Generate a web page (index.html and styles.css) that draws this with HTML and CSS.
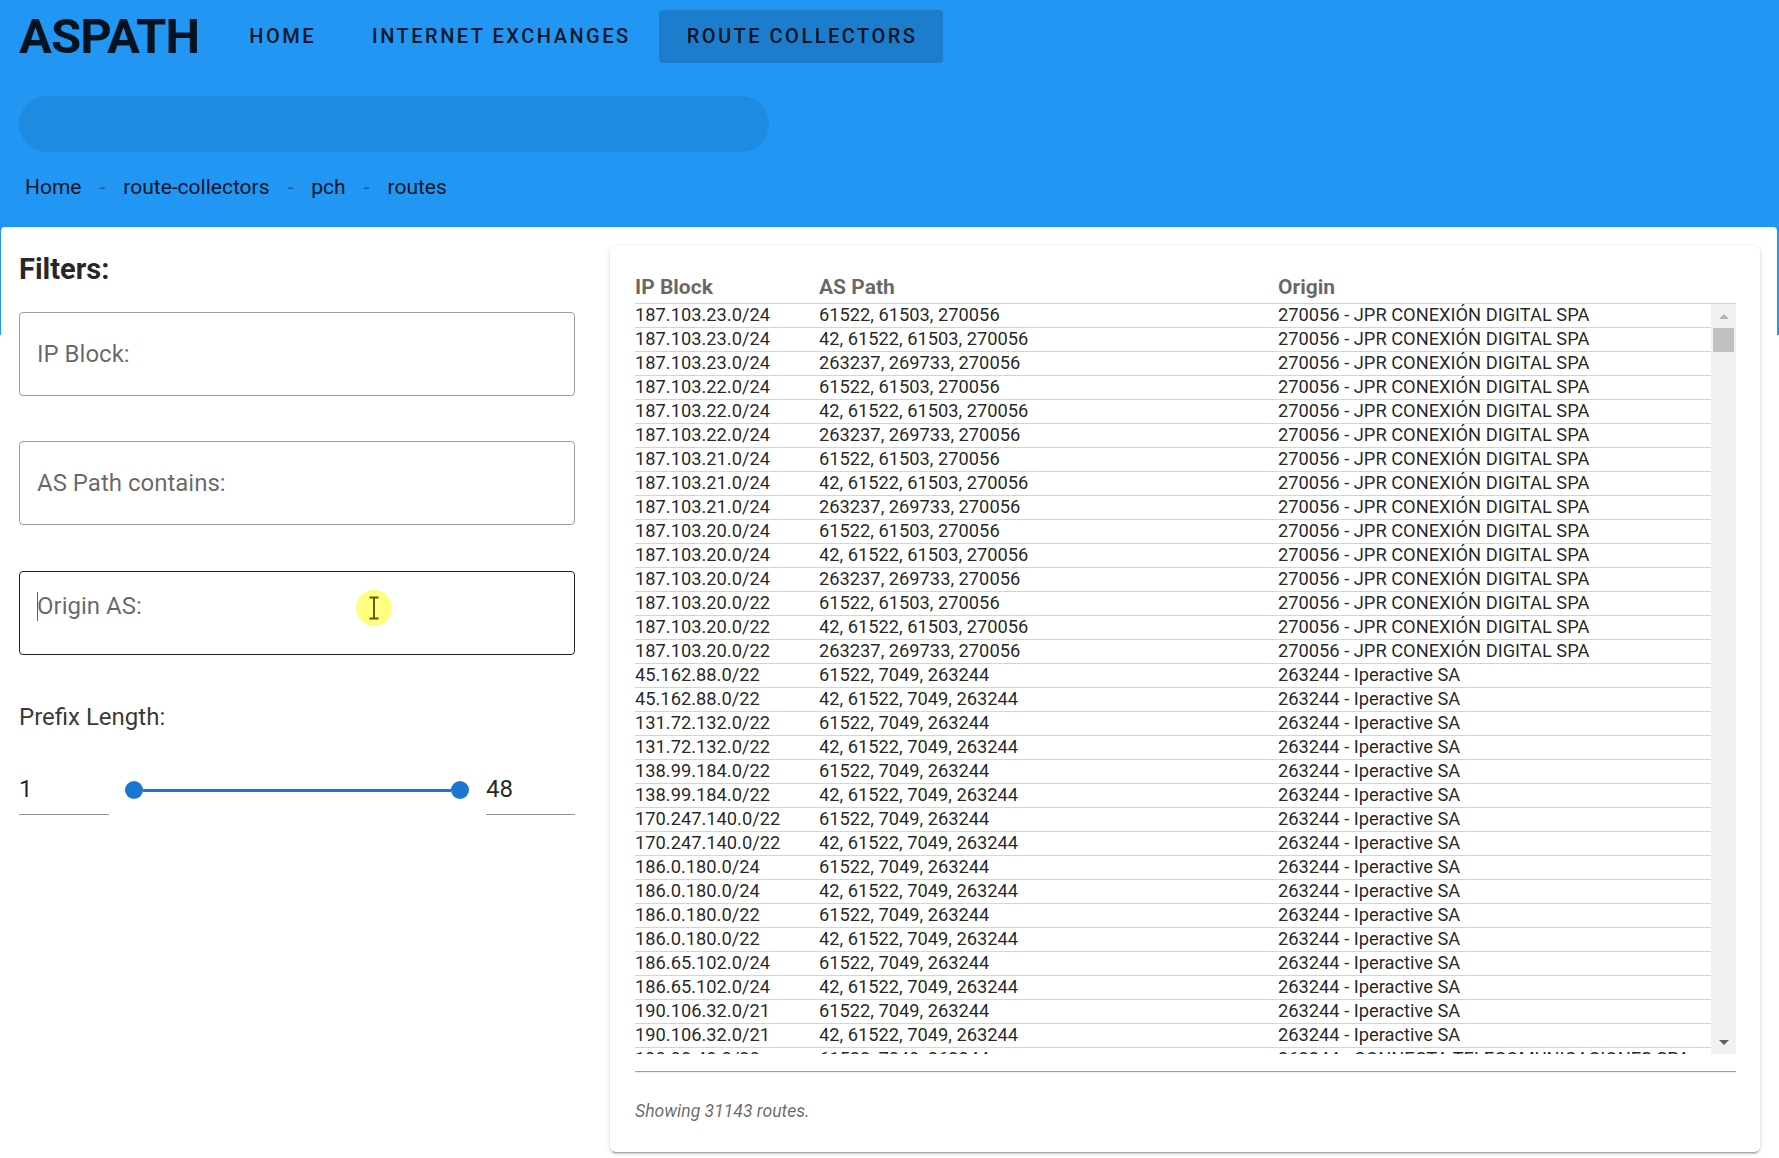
FILE: index.html
```html
<!DOCTYPE html>
<html lang="en">
<head>
<meta charset="utf-8">
<title>ASPATH - Route collectors</title>
<link rel="stylesheet" href="styles.css">
</head>
<body>
<header class="appbar">
  <div class="toolbar">
    <div class="brand">ASPATH</div>
    <nav class="nav">
      <a class="nav-btn" href="#">Home</a>
      <a class="nav-btn" href="#">Internet Exchanges</a>
      <a class="nav-btn active" href="#">Route Collectors</a>
    </nav>
  </div>
  <div class="search"></div>
  <ul class="crumbs">
    <li>Home</li><li class="divider">-</li>
    <li>route-collectors</li><li class="divider">-</li>
    <li>pch</li><li class="divider">-</li>
    <li>routes</li>
  </ul>
</header>

<div class="page">
  <main class="sheet">
    <section class="filters">
      <h2 class="filters-title">Filters:</h2>
      <div class="field"><span class="label">IP Block:</span></div>
      <div class="field"><span class="label">AS Path contains:</span></div>
      <div class="field focused">
        <span class="caret"></span><span class="label">Origin AS:</span>
        <span class="cursor-spot">
          <svg width="36" height="36" viewBox="0 0 36 36"><path d="M13.5 7.5H22.5M18 7.5V28.5M13.5 28.5H22.5" stroke="#5d5d10" stroke-width="2" fill="none"/></svg>
        </span>
      </div>
      <div class="prefix-label">Prefix Length:</div>
      <div class="range">
        <div class="range-input">1</div>
        <div class="slider">
          <span class="thumb"></span><span class="track"></span><span class="thumb"></span>
        </div>
        <div class="range-input right">48</div>
      </div>
    </section>

    <section class="card">
      <div class="thead">
        <div>IP Block</div><div>AS Path</div><div>Origin</div>
      </div>
      <div class="tbody-wrap">
        <div class="tbody">
          <div class="row"><span>187.103.23.0/24</span><span>61522, 61503, 270056</span><span>270056 - JPR CONEXIÓN DIGITAL SPA</span></div>
          <div class="row"><span>187.103.23.0/24</span><span>42, 61522, 61503, 270056</span><span>270056 - JPR CONEXIÓN DIGITAL SPA</span></div>
          <div class="row"><span>187.103.23.0/24</span><span>263237, 269733, 270056</span><span>270056 - JPR CONEXIÓN DIGITAL SPA</span></div>
          <div class="row"><span>187.103.22.0/24</span><span>61522, 61503, 270056</span><span>270056 - JPR CONEXIÓN DIGITAL SPA</span></div>
          <div class="row"><span>187.103.22.0/24</span><span>42, 61522, 61503, 270056</span><span>270056 - JPR CONEXIÓN DIGITAL SPA</span></div>
          <div class="row"><span>187.103.22.0/24</span><span>263237, 269733, 270056</span><span>270056 - JPR CONEXIÓN DIGITAL SPA</span></div>
          <div class="row"><span>187.103.21.0/24</span><span>61522, 61503, 270056</span><span>270056 - JPR CONEXIÓN DIGITAL SPA</span></div>
          <div class="row"><span>187.103.21.0/24</span><span>42, 61522, 61503, 270056</span><span>270056 - JPR CONEXIÓN DIGITAL SPA</span></div>
          <div class="row"><span>187.103.21.0/24</span><span>263237, 269733, 270056</span><span>270056 - JPR CONEXIÓN DIGITAL SPA</span></div>
          <div class="row"><span>187.103.20.0/24</span><span>61522, 61503, 270056</span><span>270056 - JPR CONEXIÓN DIGITAL SPA</span></div>
          <div class="row"><span>187.103.20.0/24</span><span>42, 61522, 61503, 270056</span><span>270056 - JPR CONEXIÓN DIGITAL SPA</span></div>
          <div class="row"><span>187.103.20.0/24</span><span>263237, 269733, 270056</span><span>270056 - JPR CONEXIÓN DIGITAL SPA</span></div>
          <div class="row"><span>187.103.20.0/22</span><span>61522, 61503, 270056</span><span>270056 - JPR CONEXIÓN DIGITAL SPA</span></div>
          <div class="row"><span>187.103.20.0/22</span><span>42, 61522, 61503, 270056</span><span>270056 - JPR CONEXIÓN DIGITAL SPA</span></div>
          <div class="row"><span>187.103.20.0/22</span><span>263237, 269733, 270056</span><span>270056 - JPR CONEXIÓN DIGITAL SPA</span></div>
          <div class="row"><span>45.162.88.0/22</span><span>61522, 7049, 263244</span><span>263244 - Iperactive SA</span></div>
          <div class="row"><span>45.162.88.0/22</span><span>42, 61522, 7049, 263244</span><span>263244 - Iperactive SA</span></div>
          <div class="row"><span>131.72.132.0/22</span><span>61522, 7049, 263244</span><span>263244 - Iperactive SA</span></div>
          <div class="row"><span>131.72.132.0/22</span><span>42, 61522, 7049, 263244</span><span>263244 - Iperactive SA</span></div>
          <div class="row"><span>138.99.184.0/22</span><span>61522, 7049, 263244</span><span>263244 - Iperactive SA</span></div>
          <div class="row"><span>138.99.184.0/22</span><span>42, 61522, 7049, 263244</span><span>263244 - Iperactive SA</span></div>
          <div class="row"><span>170.247.140.0/22</span><span>61522, 7049, 263244</span><span>263244 - Iperactive SA</span></div>
          <div class="row"><span>170.247.140.0/22</span><span>42, 61522, 7049, 263244</span><span>263244 - Iperactive SA</span></div>
          <div class="row"><span>186.0.180.0/24</span><span>61522, 7049, 263244</span><span>263244 - Iperactive SA</span></div>
          <div class="row"><span>186.0.180.0/24</span><span>42, 61522, 7049, 263244</span><span>263244 - Iperactive SA</span></div>
          <div class="row"><span>186.0.180.0/22</span><span>61522, 7049, 263244</span><span>263244 - Iperactive SA</span></div>
          <div class="row"><span>186.0.180.0/22</span><span>42, 61522, 7049, 263244</span><span>263244 - Iperactive SA</span></div>
          <div class="row"><span>186.65.102.0/24</span><span>61522, 7049, 263244</span><span>263244 - Iperactive SA</span></div>
          <div class="row"><span>186.65.102.0/24</span><span>42, 61522, 7049, 263244</span><span>263244 - Iperactive SA</span></div>
          <div class="row"><span>190.106.32.0/21</span><span>61522, 7049, 263244</span><span>263244 - Iperactive SA</span></div>
          <div class="row"><span>190.106.32.0/21</span><span>42, 61522, 7049, 263244</span><span>263244 - Iperactive SA</span></div>
          <div class="row"><span>190.90.48.0/20</span><span>61522, 7049, 263244</span><span>263244 - CONNECTA TELECOMUNICACIONES SPA</span></div>
        </div>
        <div class="scrollbar">
          <span class="sb-btn"><span class="arrow-up"></span></span>
          <span class="sb-thumb"></span>
          <span class="sb-track"></span>
          <span class="sb-btn"><span class="arrow-down"></span></span>
        </div>
      </div>
      <div class="tfoot-line"></div>
      <p class="summary">Showing 31143 routes.</p>
    </section>
  </main>
</div>
</body>
</html>
```

FILE: styles.css
```css
* { box-sizing: border-box; }

html, body { margin: 0; padding: 0; }

body {
  font-family: Roboto, "Noto Sans", "Liberation Sans", sans-serif;
  color: rgba(0, 0, 0, 0.87);
  background: #fff;
  height: 1158px;
  overflow: hidden;
}

/* ---------- App bar ---------- */
.appbar {
  background: #2196f3;
  height: 227px;
  padding-left: 19px;
}

.toolbar {
  height: 72px;
  display: flex;
  align-items: center;
}

.brand {
  font-size: 49px;
  font-weight: 700;
  letter-spacing: -0.9px;
  line-height: 1;
  color: rgba(0, 0, 0, 0.87);
  margin-right: 24px;
}

.nav {
  display: flex;
  height: 53px;
}

.nav-btn {
  display: flex;
  align-items: center;
  padding: 0 28px;
  font-size: 20px;
  font-weight: 500;
  letter-spacing: 2.5px;
  text-transform: uppercase;
  border-radius: 4px;
  color: rgba(0, 0, 0, 0.87);
  text-decoration: none;
}

.nav-btn:first-child { padding-left: 26px; }

.nav-btn.active {
  background: rgba(0, 0, 0, 0.16);
  padding-right: 26px;
}

.search {
  margin-top: 24px;
  width: 750px;
  height: 56px;
  border-radius: 28px;
  background: rgba(0, 0, 0, 0.07);
}

.crumbs {
  list-style: none;
  margin: 20px 0 0 6px;
  padding: 0;
  display: flex;
  font-size: 21px;
  line-height: 30px;
}

.crumbs .divider {
  padding: 0 18px;
  color: rgba(0, 0, 0, 0.38);
}

/* ---------- Page sheet ---------- */
.page {
  background: linear-gradient(#2196f3 108px, #fff 108px);
  padding: 0 2px 0 1px;
}

.sheet {
  background: #fff;
  border-radius: 4px 4px 0 0;
  height: 931px;
  display: grid;
  grid-template-columns: 556px 1150px;
  column-gap: 35px;
  align-items: start;
  padding: 19px 0 0 18px;
}

/* ---------- Filters ---------- */
.filters { padding-top: 5px; }

.filters-title {
  margin: 0 0 25px;
  font-size: 29px;
  font-weight: 700;
  line-height: 36px;
}

.field {
  position: relative;
  height: 84px;
  border: 1px solid rgba(0, 0, 0, 0.38);
  border-radius: 4px;
  display: flex;
  align-items: center;
  padding-left: 17px;
  font-size: 24px;
  color: rgba(0, 0, 0, 0.6);
}

.field + .field { margin-top: 45px; }

.field.focused {
  margin-top: 46px;
  border-color: rgba(0, 0, 0, 0.87);
  padding-bottom: 14px;
}

.caret {
  display: inline-block;
  width: 0;
  height: 29px;
  border-left: 1px solid #1976d2;
  margin-right: -1px;
}

.cursor-spot {
  position: absolute;
  left: 336px;
  top: 18px;
  width: 36px;
  height: 36px;
  border-radius: 50%;
  background: rgba(255, 255, 0, 0.5);
}

.cursor-spot svg { display: block; }

.prefix-label {
  margin-top: 47px;
  font-size: 24px;
  line-height: 30px;
  color: rgba(0, 0, 0, 0.8);
}

.range {
  margin-top: 33px;
  height: 50px;
  display: flex;
  align-items: center;
}

.range-input {
  width: 90px;
  height: 50px;
  line-height: 48px;
  font-size: 24px;
  border-bottom: 1px solid rgba(0, 0, 0, 0.42);
  color: rgba(0, 0, 0, 0.87);
}

.range-input.right { width: 89px; }

.slider {
  flex: 1;
  margin: 0 17px 0 16px;
  display: flex;
  align-items: center;
}

.thumb {
  width: 18px;
  height: 18px;
  border-radius: 50%;
  background: #1976d2;
  flex: none;
}

.track {
  flex: 1;
  height: 3px;
  background: #1976d2;
}

/* ---------- Routes card ---------- */
.card {
  background: #fff;
  border-radius: 6px;
  height: 906px;
  padding: 26px 24px 0 25px;
  box-shadow: 0 3px 1px -2px rgba(0, 0, 0, 0.2), 0 2px 2px 0 rgba(0, 0, 0, 0.14), 0 1px 5px 0 rgba(0, 0, 0, 0.12);
}

.thead,
.row {
  display: grid;
  grid-template-columns: 184px 459px 1fr;
}

.thead {
  height: 32px;
  line-height: 31px;
  border-bottom: 1px solid #d0d0d0;
  font-size: 21px;
  font-weight: 700;
  color: rgba(0, 0, 0, 0.6);
}

.tbody-wrap {
  display: flex;
  height: 750px;
}

.tbody {
  width: 1076px;
  overflow: hidden;
}

.row {
  height: 24px;
  line-height: 22px;
  padding-bottom: 1px;
  border-bottom: 1px solid #d4d4d4;
  font-size: 18.3px;
  white-space: nowrap;
  color: rgba(0, 0, 0, 0.87);
}

.scrollbar {
  width: 25px;
  background: #f1f1f1;
  display: flex;
  flex-direction: column;
  align-items: center;
}

.sb-btn {
  width: 25px;
  height: 24px;
  display: flex;
  align-items: center;
  justify-content: center;
}

.arrow-up {
  width: 0;
  height: 0;
  border-left: 5px solid transparent;
  border-right: 5px solid transparent;
  border-bottom: 5px solid #b4b4b4;
}

.arrow-down {
  width: 0;
  height: 0;
  border-left: 5px solid transparent;
  border-right: 5px solid transparent;
  border-top: 5px solid #5f5f5f;
}

.sb-thumb {
  width: 21px;
  height: 24px;
  background: #c1c1c1;
}

.sb-track { flex: 1; }

.tfoot-line {
  margin-top: 17px;
  border-top: 1px solid #9e9e9e;
  border-bottom: 1px solid #eeeeee;
}

.summary {
  margin: 27px 0 0;
  font-size: 17.6px;
  line-height: 22px;
  font-style: italic;
  color: rgba(0, 0, 0, 0.6);
}
```
